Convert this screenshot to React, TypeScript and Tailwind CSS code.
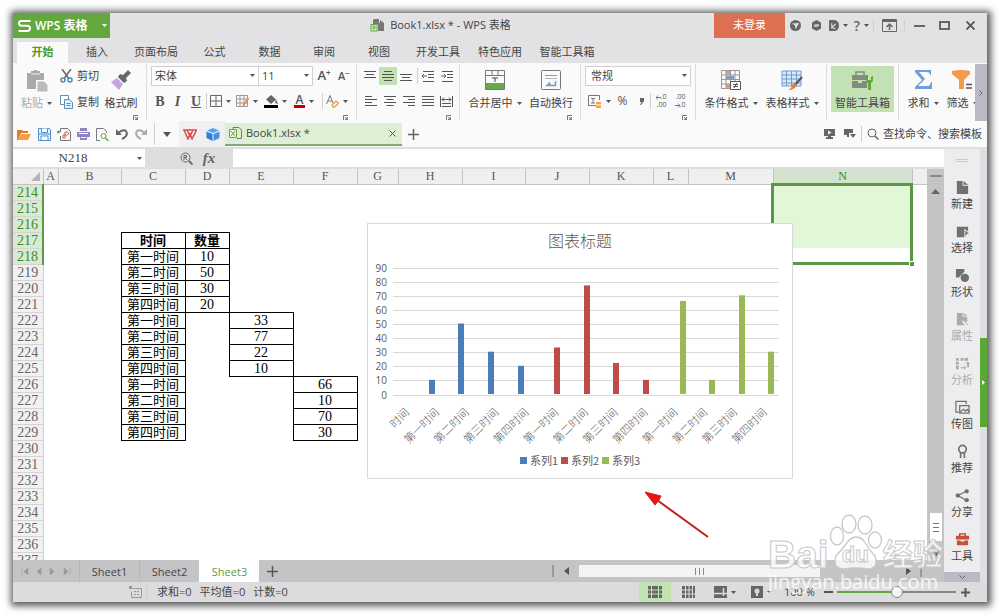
import { useState, type ReactNode } from 'react';
import clsx from 'clsx';

const ribbonTabs = [
  { label: '开始', width: 'w-[51px]' },
  { label: '插入', width: 'w-[58px]' },
  { label: '页面布局', width: 'w-[60px]' },
  { label: '公式', width: 'w-[57px]' },
  { label: '数据', width: 'w-[53px]' },
  { label: '审阅', width: 'w-[56px]' },
  { label: '视图', width: 'w-[54px]' },
  { label: '开发工具', width: 'w-[64px]' },
  { label: '特色应用', width: 'w-[60px]' },
  { label: '智能工具箱', width: 'w-[74px]' },
];

const columns = [
  { name: 'A', width: 'w-[15px]' },
  { name: 'B', width: 'w-[63px]' },
  { name: 'C', width: 'w-[64px]' },
  { name: 'D', width: 'w-[44px]' },
  { name: 'E', width: 'w-[64px]' },
  { name: 'F', width: 'w-[64px]' },
  { name: 'G', width: 'w-[41px]' },
  { name: 'H', width: 'w-[64px]' },
  { name: 'I', width: 'w-[63px]' },
  { name: 'J', width: 'w-[64px]' },
  { name: 'K', width: 'w-[64px]' },
  { name: 'L', width: 'w-[35px]' },
  { name: 'M', width: 'w-[85px]' },
  { name: 'N', width: 'w-[139px]' },
];

const periods = ['第一时间', '第二时间', '第三时间', '第四时间'];

const cells: Record<number, Record<string, string>> = {
  217: { C: '时间', D: '数量' },
};
[
  { start: 218, column: 'D', values: ['10', '50', '30', '20'] },
  { start: 222, column: 'E', values: ['33', '77', '22', '10'] },
  { start: 226, column: 'F', values: ['66', '10', '70', '30'] },
].forEach(({ start, column, values }) => {
  values.forEach((value, i) => {
    cells[start + i] = { C: periods[i], [column]: value };
  });
});

const rows = Array.from({ length: 24 }, (_, i) => 214 + i);

const series = [
  { name: '系列1', color: '#4a7ebb', bars: [[61, 10], [90, 50], [120, 30], [150, 20]] },
  { name: '系列2', color: '#be4b48', bars: [[186, 33], [216, 77], [245, 22], [275, 10]] },
  { name: '系列3', color: '#98b954', bars: [[312, 66], [341, 10], [371, 70], [400, 30]] },
];

const categories = ['时间', ...periods, ...periods, ...periods];

function Caret({ className }: { className?: string }) {
  return (
    <svg width="5" height="3" viewBox="0 0 5 3" className={clsx('shrink-0', className ?? 'fill-[#555]')}>
      <path d="M0 0h5L2.5 3z" />
    </svg>
  );
}

function Lines({ widths, align = 'left' }: { widths: number[]; align?: 'left' | 'center' | 'right' }) {
  return (
    <svg width="12" height="12" viewBox="0 0 12 12" className="fill-[#555]">
      {widths.map((w, i) => (
        <rect
          key={i}
          x={align === 'left' ? 0 : align === 'center' ? (12 - w) / 2 : 12 - w}
          y={1 + i * 3}
          width={w}
          height="1"
        />
      ))}
    </svg>
  );
}

function Indent({ flip }: { flip?: boolean }) {
  return (
    <svg width="13" height="13" viewBox="0 0 13 13" fill="none" stroke="#555">
      <path d="M1 1.5h11M6 4.5h6M6 7.5h6M1 11.5h11" />
      <path d={flip ? 'M0 6h5M3 4l2 2-2 2' : 'M0 6h5M2 4l-2 2 2 2'} stroke="#4a6a86" />
    </svg>
  );
}

function Tool({ label, width, children, caret, active }: {
  label: string;
  width: string;
  children: ReactNode;
  caret?: boolean;
  active?: boolean;
}) {
  return (
    <button
      aria-label={label}
      className={clsx('flex h-[18px] shrink-0 items-center justify-center gap-1', width, active && 'bg-[#c3e2b4]')}
    >
      {children}
      {caret && <Caret />}
    </button>
  );
}

function BigTool({ label, width, children, caret, className }: {
  label: string;
  width: string;
  children: ReactNode;
  caret?: boolean;
  className?: string;
}) {
  return (
    <button className={clsx('flex h-[46px] shrink-0 flex-col items-center justify-between pt-1 pb-px', width, className)}>
      {children}
      <span className="flex items-center gap-1 whitespace-nowrap leading-4">
        {label}
        {caret && <Caret />}
      </span>
    </button>
  );
}

function Group({ children, className, launcher }: { children: ReactNode; className: string; launcher?: boolean }) {
  return (
    <div className={clsx('relative my-px shrink-0 border-r border-[#dcdcdc] pt-[2px]', className)}>
      {children}
      {launcher && (
        <button aria-label="更多设置" className="absolute right-2 bottom-0">
          <svg width="5" height="5" viewBox="0 0 5 5" fill="none" stroke="#777">
            <path d="M.5 5V.5H5M2 2l2.5 2.5M4.5 2v2.5H2" />
          </svg>
        </button>
      )}
    </div>
  );
}

function Divider({ className }: { className?: string }) {
  return <span className={clsx('w-px shrink-0 bg-[#cfcfcf]', className ?? 'h-4')} />;
}

function TitleBar() {
  return (
    <header className="flex h-[25px] shrink-0 bg-[#e2e2e4]">
      <div className="flex flex-3">
        <button className="flex w-[97px] items-center bg-[#62a83d] pl-[5px] text-[12px] font-semibold text-white">
          <svg width="13" height="12" viewBox="0 0 13 12" fill="none" stroke="white" strokeWidth="2">
            <path d="M12.5 1H3.5Q1 1 1 3.300T3.500 5.800H9.500Q12 5.800 12 8.300T9.500 11H.5" />
          </svg>
          <span className="ml-1 flex-1 text-left whitespace-nowrap">WPS 表格</span>
          <Caret className="mr-[3px] fill-white" />
        </button>
      </div>
      <h1 className="flex items-center gap-1.5 whitespace-nowrap">
        <svg width="14" height="13" viewBox="0 0 14 13">
          <path d="M4 0h5v4h1V1l4 3v8H8V5H3V1z" fill="#777" />
          <rect x="1" y="5.500" width="6" height="6.500" fill="#e8f4e0" stroke="#62a83d" />
          <path d="M3 7h2v3H3z" fill="none" stroke="#62a83d" />
        </svg>
        Book1.xlsx * - WPS 表格
      </h1>
      <div className="flex flex-4 items-center justify-end">
        <button className="h-full w-[71px] bg-[#dd7053] text-white">未登录</button>
        <Tool label="皮肤" width="w-[21px]">
          <svg width="11" height="11" viewBox="0 0 11 11">
            <circle cx="5.500" cy="5.500" r="5.500" fill="#666" />
            <path d="M2 3.500L5 5.500 5.500 9.500 9 3z" fill="#e2e2e4" />
          </svg>
        </Tool>
        <Tool label="云服务" width="w-[20px]">
          <svg width="11" height="11" viewBox="0 0 11 11">
            <path d="M5.500 0l4.500 2.500v6l-4.500 2.500L1 8.500v-6z" fill="#666" />
            <path d="M2.500 5.500l2-1.500h3l1 1.500-2 1.500h-3z" fill="#c0c0c2" />
          </svg>
        </Tool>
        <Tool label="文档" width="w-[24px]" caret>
          <svg width="10" height="11" viewBox="0 0 9 10">
            <path d="M0 0h4Q9 0 9 5T4 10H0z" fill="#666" />
            <path d="M2.500 3v4L6 3.500M3 7.500h3" stroke="#e2e2e4" fill="none" />
          </svg>
        </Tool>
        <Tool label="帮助" width="w-[23px]" caret>
          <span className="text-[14px] font-semibold text-[#666]">?</span>
        </Tool>
        <Divider className="h-3" />
        <Tool label="隐藏功能区" width="w-[30px]">
          <svg width="15" height="13" viewBox="0 0 15 13" fill="none" stroke="#666">
            <path d="M.5.5h14v12H.5z" />
            <path d="M1 2h13" strokeWidth="2" />
            <path d="M7.500 11V5.500M4.500 8l3-3 3 3" strokeWidth="1.500" />
          </svg>
        </Tool>
        <Divider className="h-3" />
        <Tool label="最小化" width="w-[29px]">
          <span className="h-[2px] w-[11px] bg-[#666]" />
        </Tool>
        <Tool label="最大化" width="w-[20px]">
          <span className="h-[9px] w-[11px] border-2 border-[#666]" />
        </Tool>
        <Tool label="关闭" width="w-[33px]">
          <svg width="9" height="9" viewBox="0 0 9 9" stroke="#555" strokeWidth="1.800">
            <path d="M.5.5l8 8M8.500.5l-8 8" />
          </svg>
        </Tool>
      </div>
    </header>
  );
}

function FontGroup() {
  return (
    <Group className="w-[210px] pl-1" launcher>
      <div className="flex h-5 items-center">
        <label className="relative w-[108px]">
          <select aria-label="字体" className="h-[20px] w-full appearance-none border border-[#d0d0d0] bg-white pl-[3px]">
            <option>宋体</option>
          </select>
          <Caret className="absolute top-2 right-1 fill-[#555]" />
        </label>
        <label className="relative -ml-px w-[55px]">
          <select aria-label="字号" className="h-[20px] w-full appearance-none border border-[#d0d0d0] bg-white pl-[3px]">
            <option>11</option>
          </select>
          <Caret className="absolute top-2 right-1 fill-[#555]" />
        </label>
        <Tool label="增大字号" width="w-[22px]">
          <span className="text-[13px] font-semibold text-[#555]">A<sup className="text-[8px]">+</sup></span>
        </Tool>
        <Tool label="减小字号" width="w-[18px]">
          <span className="text-[11px] font-semibold text-[#555]">A<sup className="text-[8px]">−</sup></span>
        </Tool>
      </div>
      <div className="mt-[5px] flex h-5 items-center font-['Liberation_Serif',serif] text-[14px] text-[#555]">
        <Tool label="加粗" width="w-[18px]"><b>B</b></Tool>
        <Tool label="倾斜" width="w-[17px]"><i className="font-bold">I</i></Tool>
        <Tool label="下划线" width="w-[20px]"><span className="font-bold underline">U</span></Tool>
        <Divider />
        <Tool label="边框" width="w-[27px]" caret>
          <svg width="12" height="12" viewBox="0 0 12 12" fill="none" stroke="#666">
            <path d="M.5.5h11v11H.5zM6 .5v11M.5 6h11" />
          </svg>
        </Tool>
        <Tool label="绘图边框" width="w-[26px]" caret>
          <svg width="13" height="12" viewBox="0 0 13 12" fill="none" stroke="#999">
            <path d="M.5.5h11v11H.5zM4 .5v11M8 .5v11M.5 4h11M.5 8h11" />
            <path d="M12.500 3L7 11" stroke="#e2945a" strokeWidth="2" />
          </svg>
        </Tool>
        <Tool label="填充颜色" width="w-[30px]" caret>
          <svg width="14" height="13" viewBox="0 0 14 13">
            <path d="M7 0l5 4.500L7 9 2 4.500zM12 4l2 5-3-1z" fill="#666" />
            <path d="M0 10h14v3H0z" fill="#000" />
          </svg>
        </Tool>
        <Tool label="字体颜色" width="w-[28px]" caret>
          <span className="border-b-[3px] border-[#c00000] px-[2px] font-['Open_Sans',sans-serif] text-[12px] leading-[11px] font-semibold">A</span>
        </Tool>
        <Divider className="ml-1 h-4" />
        <Tool label="清除格式" width="w-[28px]" caret>
          <svg width="13" height="13" viewBox="0 0 13 13" fill="none" stroke="#777">
            <path d="M.5 9L4 .5 7 8M2 6h4" />
            <path d="M6 10l4-4 2.500 2-4 4H7z" stroke="#e8a04c" strokeWidth="1.300" />
          </svg>
        </Tool>
      </div>
    </Group>
  );
}

function Ribbon() {
  return (
    <div className="flex h-[58px] shrink-0 overflow-hidden bg-[#fafafa]">
      <div className="flex min-w-0 flex-1 overflow-hidden">
        <Group className="w-[134px]" launcher>
          <div className="flex">
            <BigTool label="粘贴" width="w-[47px]" caret className="text-[#aaa]">
              <svg width="22" height="22" viewBox="0 0 22 22">
                <path d="M1 3h4V1h3V0h3v1h3v2h4v7h-8v9H1z" fill="#aaa" />
                <path d="M5 4h9" stroke="#eee" />
                <path d="M11 11h7l4 4v7H11z" fill="#bbb" stroke="#fafafa" />
              </svg>
            </BigTool>
            <div className="flex w-[42px] flex-col justify-between">
              <button className="flex h-[20px] items-center gap-1 whitespace-nowrap">
                <svg width="13" height="14" viewBox="0 0 13 14" fill="none" strokeWidth="1.500">
                  <path d="M2 0l6.500 9M11 0L4.500 9" stroke="#666" />
                  <circle cx="3" cy="11" r="2" stroke="#4a8ab8" />
                  <circle cx="10" cy="11" r="2" stroke="#4a8ab8" />
                </svg>
                剪切
              </button>
              <button className="flex h-[20px] items-center gap-1 whitespace-nowrap">
                <svg width="13" height="14" viewBox="0 0 13 14" fill="#fff" stroke="#5b8fb5">
                  <path d="M.5.5h8v9h-8z" />
                  <path d="M4.500 4.500h5l3 3v6h-8z" fill="#e4f0f8" />
                  <path d="M6.500 8.500h4M6.500 10.500h4" />
                </svg>
                复制
              </button>
            </div>
            <BigTool label="格式刷" width="w-[38px]">
              <svg width="20" height="20" viewBox="0 0 20 20">
                <path d="M17 0l3 3-5 5 1 3-3 2-6-6 2-3 3 1z" fill="#666" />
                <path d="M6 8l6 6-4 6-8-8z" fill="#c5a3e6" />
              </svg>
            </BigTool>
          </div>
        </Group>

        <FontGroup />

        <Group className="w-[103px] pl-1" launcher>
          <div className="flex h-5 items-center">
            <Tool label="顶端对齐" width="w-[18px]"><Lines widths={[12, 8, 12]} align="center" /></Tool>
            <Tool label="垂直居中" width="w-[18px]" active><Lines widths={[8, 12, 12, 8]} align="center" /></Tool>
            <Tool label="底端对齐" width="w-[18px]"><Lines widths={[0, 12, 8, 12]} align="center" /></Tool>
            <Divider className="ml-[2px] h-4" />
            <Tool label="减少缩进" width="w-[20px]"><Indent /></Tool>
            <Tool label="增加缩进" width="w-[18px]"><Indent flip /></Tool>
          </div>
          <div className="mt-[5px] flex h-5 items-center">
            <Tool label="左对齐" width="w-[19px]"><Lines widths={[7, 12, 7, 12]} /></Tool>
            <Tool label="居中" width="w-[19px]"><Lines widths={[12, 7, 12, 7]} align="center" /></Tool>
            <Tool label="右对齐" width="w-[19px]"><Lines widths={[12, 7, 12, 7]} align="right" /></Tool>
            <Tool label="两端对齐" width="w-[19px]"><Lines widths={[12, 12, 12, 12]} /></Tool>
            <Tool label="分散对齐" width="w-[19px]">
              <svg width="13" height="11" viewBox="0 0 13 11" fill="none" stroke="#555">
                <path d="M.5 0v11M12.500 0v11M2 3.500h9M4 1.500l-2 2 2 2M9 1.500l2 2-2 2M2 7.500h9M2 10.500h9" />
              </svg>
            </Tool>
          </div>
        </Group>

        <Group className="flex w-[121px] pl-1" launcher>
          <BigTool label="合并居中" width="w-[62px]" caret>
            <svg width="20" height="20" viewBox="0 0 20 20" fill="none" stroke="#777">
              <path d="M1 13h18v6H1z" fill="#6aa84f" stroke="none" />
              <path d="M.5.5h19v19H.5zM.5 5.500h19M7 0v5M13 0v5" />
              <path d="M7 8h6M10 8v4" stroke="#444" />
            </svg>
          </BigTool>
          <BigTool label="自动换行" width="w-[50px]">
            <svg width="20" height="20" viewBox="0 0 20 20" fill="none" stroke="#777">
              <rect x=".5" y=".5" width="19" height="19" rx="1" />
              <path d="M4 5.500h12" stroke="#999" />
              <path d="M4 8.500h12" stroke="#bfaec4" />
              <path d="M14.500 11v4.500H6M8.500 13L6 15.500h3z" stroke="#6f9bd0" strokeWidth="1.500" />
            </svg>
          </BigTool>
        </Group>

        <Group className="w-[115px] pl-1" launcher>
          <label className="relative block w-[106px]">
            <select aria-label="数字格式" className="h-[20px] w-full appearance-none border border-[#d0d0d0] bg-white pl-[5px]">
              <option>常规</option>
            </select>
            <Caret className="absolute top-2 right-1 fill-[#555]" />
          </label>
          <div className="mt-[5px] flex h-5 items-center text-[#555]">
            <Tool label="货币" width="w-[28px]" caret>
              <svg width="14" height="13" viewBox="0 0 14 13" fill="none" stroke="#777">
                <path d="M8 10.500H.5V.5h11V5M3 3.500h4M5 3.500V8M3 8h4" />
                <path d="M8.500 7.500h4v5h-4z" fill="#f2a33c" stroke="#f2a33c" />
                <path d="M8 10h6" stroke="#fff" />
              </svg>
            </Tool>
            <Tool label="百分比" width="w-[19px]"><span className="text-[12px]">%</span></Tool>
            <Tool label="千位分隔" width="w-[18px]">
              <svg width="5" height="7" viewBox="0 0 5 7"><path d="M1 0h4v3L2 7H1l1.500-3H1z" fill="#666" /></svg>
            </Tool>
            <Divider />
            <Tool label="增加小数位" width="w-[20px]">
              <span className="flex flex-col items-end text-[7px] leading-[8px]">
                <span className="flex items-center">
                  <svg width="5" height="5" viewBox="0 0 5 5" fill="none" stroke="#4a86b8"><path d="M0 2.500h5M2 .5l-2 2 2 2" /></svg>
                  .0
                </span>
                <span>.00</span>
              </span>
            </Tool>
            <Tool label="减少小数位" width="w-[18px]">
              <span className="flex flex-col items-end text-[7px] leading-[8px]">
                <span>.00</span>
                <span className="flex items-center">
                  <svg width="5" height="5" viewBox="0 0 5 5" fill="none" stroke="#4a86b8"><path d="M0 2.500h5M3 .5l2 2-2 2" /></svg>
                  .0
                </span>
              </span>
            </Tool>
          </div>
        </Group>

        <Group className="flex w-[131px] pl-[5px]">
          <BigTool label="条件格式" width="w-[60px]" caret>
            <svg width="20" height="20" viewBox="0 0 20 20" fill="none" stroke="#999">
              <path d="M5 1h5v4H5zM5 14h4v4H5z" fill="#ef9a68" stroke="none" />
              <path d="M5 6h8v3H5z" fill="#6ea0dc" stroke="none" />
              <path d="M.5.5h18v18H.5zM5 .5v18M9.500 .5v18M14 .5v18M.5 5h18M.5 9.500h18M.5 14h18" />
              <path d="M9.500 11.500h10v8h-10z" fill="#fff" stroke="#555" />
              <path d="M12 14.500h5M12 16.500h5M16 13l-3 5" stroke="#555" />
            </svg>
          </BigTool>
          <BigTool label="表格样式" width="w-[62px]" caret>
            <svg width="22" height="20" viewBox="0 0 22 20" fill="none" stroke="#6f9bd0">
              <path d="M1 1h19v15H1z" fill="#dce9f8" />
              <path d="M5.500 1v15M10.500 1v15M15.500 1v15M1 5h19M1 9h19M1 13h19" />
              <path d="M21 7l-7 8" stroke="#555" strokeWidth="2" />
              <path d="M14 13l2 2q-2 5-9 5 4-2 4-5 1-2 3-2z" fill="#e0803c" stroke="none" />
            </svg>
          </BigTool>
        </Group>

        <Group className="flex w-[72px] pl-1">
          <BigTool label="智能工具箱" width="w-[63px]" className="bg-[#c3e2b4]">
            <svg width="22" height="20" viewBox="0 0 22 20">
              <path d="M4 5V2h8v3" fill="none" stroke="#888" strokeWidth="1.500" />
              <path d="M0 5h16v5H0zM0 11h6v2h4v-2h5v7H0z" fill="#858b83" />
              <path d="M14 6v4q0 2 2 3v7h3v-7q2-1 2-3V6l-2 1v3h-3V7z" fill="#62a83d" />
            </svg>
          </BigTool>
        </Group>

        <div className="flex shrink-0 pt-[3px] pl-1">
          <BigTool label="求和" width="w-[40px]" caret>
            <svg width="17" height="19" viewBox="0 0 17 19">
              <path d="M0 0h16v5h-1q0-3-3-3H4l6 7-7 7h10q2 0 3-4h1v7H0v-2l7-7-7-8z" fill="#6ba0d8" />
            </svg>
          </BigTool>
          <BigTool label="筛选" width="w-[38px]" caret>
            <svg width="20" height="20" viewBox="0 0 20 20">
              <path d="M0 1Q9-1 18 1v3l-6 6v9H7v-9L0 4z" fill="#f29a50" />
              <path d="M14 14.500h6M14 18h6" stroke="#555" strokeWidth="1.500" />
            </svg>
          </BigTool>
        </div>
      </div>
      <button aria-label="向右滚动" className="mt-px flex w-3 items-center justify-center bg-[#b9bac4]">
        <svg width="4" height="6" viewBox="0 0 4 6" fill="none" stroke="#666"><path d="M.5.5L3 3 .5 5.500" /></svg>
      </button>
    </div>
  );
}

function QuickBar() {
  return (
    <div className="flex h-[26px] shrink-0 items-center bg-[#fafafa] pl-px">
      <Tool label="打开" width="w-[20px]">
        <svg width="14" height="11" viewBox="0 0 14 11">
          <path d="M0 11V1h5l1 1h5v2H4L1 11z" fill="#e07d20" /><path d="M4 5h10l-3 6H1z" fill="#f2a044" />
        </svg>
      </Tool>
      <Tool label="保存" width="w-[20px]">
        <svg width="13" height="13" viewBox="0 0 13 13" fill="none" stroke="#4f8fd0">
          <path d="M.5.5h11l1 1v11H.5z" fill="#e4f0fb" /><path d="M3.500.5v4h6v-4M3 8h7v4.500H3z" fill="#fff" /><path d="M1 6h11" />
        </svg>
      </Tool>
      <Tool label="输出为PDF" width="w-[20px]">
        <svg width="14" height="13" viewBox="0 0 14 13" fill="none" stroke="#777">
          <path d="M3.500 4V.5h7l3 3v9h-10V8" />
          <path d="M0 4h3M1.500 2.500v3" stroke="#62a83d" strokeWidth="1.500" />
          <path d="M8 7H6v3h2V4h1.500q2 0 2 1.500T9.500 7H8" stroke="#d05a5a" />
        </svg>
      </Tool>
      <Tool label="打印" width="w-[19px]">
        <svg width="13" height="12" viewBox="0 0 13 12">
          <path d="M3 0h7v3H3zM0 4h13v5H0zM3 8h7v4H3z" fill="#8f83c4" />
          <path d="M2 5.500h9M4 9.500h5" stroke="#fff" />
        </svg>
      </Tool>
      <Tool label="打印预览" width="w-[19px]">
        <svg width="13" height="13" viewBox="0 0 13 13" fill="none" stroke="#777">
          <path d="M4 12.500H.5V.5h7l3 3V5" />
          <circle cx="7.500" cy="8" r="2.500" stroke="#62a83d" /><path d="M9.500 10l3 3" stroke="#62a83d" strokeWidth="1.500" />
        </svg>
      </Tool>
      <Tool label="撤销" width="w-[19px]">
        <svg width="12" height="12" viewBox="0 0 12 12">
          <path d="M2 5q7-5 8.500-1T6 11" fill="none" stroke="#666" strokeWidth="2" /><path d="M0 1v6h6z" fill="#666" />
        </svg>
      </Tool>
      <Tool label="恢复" width="w-[19px]">
        <svg width="12" height="12" viewBox="0 0 12 12">
          <path d="M10 5Q3 0 1.500 4T6 11" fill="none" stroke="#aaa" strokeWidth="2" /><path d="M12 1v6H6z" fill="#aaa" />
        </svg>
      </Tool>
      <Divider className="ml-1 h-[22px]" />
      <Tool label="自定义快速访问" width="w-[24px]">
        <svg width="8" height="5" viewBox="0 0 8 5"><path d="M0 0h8L4 5z" fill="#555" /></svg>
      </Tool>
      <div className="flex h-full items-center bg-[#f0f0f2]">
        <Tool label="WPS首页" width="w-[22px]">
          <svg width="14" height="11" viewBox="0 0 14 11" fill="none" stroke="#dd4b4b" strokeWidth="1.500">
            <path d="M0 1h14M1 1l4 9 2-5 2 5 4.500-9M4 1l3 6 3-6" />
          </svg>
        </Tool>
        <Tool label="在线模板" width="w-[24px]">
          <svg width="14" height="13" viewBox="0 0 14 13">
            <path d="M7 0l6 2.500L7 5 1 2.500z" fill="#5aa2ee" /><path d="M.5 3.500L6.500 6v7l-6-3z" fill="#2f7fd8" /><path d="M13.500 3.500L7.500 6v7l6-3z" fill="#4790e4" />
          </svg>
        </Tool>
      </div>
      <div className="flex h-[23px] w-[177px] items-center border-b-2 border-[#84a974] bg-[#dfefd6] pl-1">
        <svg width="13" height="12" viewBox="0 0 13 12" fill="none" stroke="#777">
          <path d="M4 2V.5h6l2.500 2.500v8.500H8" /><path d="M.5 2.500h7v8h-7z" fill="#eef8e8" stroke="#62a83d" /><path d="M2 4l4 5M6 4L2 9" stroke="#62a83d" />
        </svg>
        <span className="ml-1 flex-1">Book1.xlsx *</span>
        <Tool label="关闭文档" width="w-[20px]">
          <svg width="7" height="7" viewBox="0 0 7 7" stroke="#555"><path d="M.5.5l6 6M6.500.5l-6 6" /></svg>
        </Tool>
      </div>
      <Tool label="新建文档" width="w-[23px]">
        <svg width="11" height="11" viewBox="0 0 11 11" stroke="#666" strokeWidth="1.500"><path d="M5.500 0v11M0 5.500h11" /></svg>
      </Tool>
      <div className="ml-auto flex items-center pr-1">
        <Tool label="演示" width="w-[20px]">
          <svg width="11" height="10" viewBox="0 0 11 10"><path d="M0 0h11v7H7v1h2v2H2V8h2V7H0z" fill="#666" /><path d="M4 1.500v4l3.500-2z" fill="#fff" /></svg>
        </Tool>
        <Tool label="界面设置" width="w-[22px]">
          <svg width="12" height="10" viewBox="0 0 12 10"><path d="M0 0h9v4H5v4H3V6H0z" fill="#666" /><path d="M6 5h6L9 9z" fill="#666" /></svg>
        </Tool>
        <Divider />
        <label className="flex items-center pl-[5px]">
          <svg width="12" height="12" viewBox="0 0 12 12" fill="none" stroke="#666"><circle cx="5" cy="5" r="4" /><path d="M8 8l3.500 3.500" strokeWidth="1.500" /></svg>
          <input aria-label="查找命令、搜索模板" placeholder="查找命令、搜索模板" className="ml-1 w-[100px] bg-transparent outline-none placeholder:text-[#444]" />
        </label>
      </div>
    </div>
  );
}

function FormulaBar() {
  return (
    <div className="flex h-[22px] shrink-0 items-stretch border-y-2 border-[#dededf] bg-[#dededf]">
      <label className="relative flex w-[132px] bg-white">
        <input aria-label="名称框" defaultValue="N218" className="w-[120px] text-center font-['Liberation_Serif',serif] text-[13px] text-[#444] outline-none" />
        <Caret className="absolute top-2 right-[3px] fill-[#555]" />
      </label>
      <div className="flex w-[88px] items-center justify-end gap-[3px] pr-[14px]">
        <Tool label="查找函数" width="w-[20px]">
          <svg width="13" height="13" viewBox="0 0 13 13" fill="none" stroke="#666"><circle cx="5.500" cy="5.500" r="4.500" /><path d="M9 9l3.500 3.500" strokeWidth="1.800" /><path d="M4 8V3.500h2.500v2H4M5.500 5.500L7 8" /></svg>
        </Tool>
        <Tool label="插入函数" width="w-[20px]">
          <i className="font-['Liberation_Serif',serif] text-[15px] font-bold text-[#666]">fx</i>
        </Tool>
      </div>
      <input aria-label="编辑栏" className="min-w-0 flex-1 bg-white outline-none" />
    </div>
  );
}

function Chart() {
  return (
    <figure className="absolute top-[54px] left-[354px] border border-[#d9d9d9] bg-white">
      <svg width="424" height="254" viewBox="0 0 424 254" fill="#595959" className="font-['Noto_Sans_CJK_SC',sans-serif] font-light">
        <text x="212" y="23" fontSize="16" textAnchor="middle">图表标题</text>
        {Array.from({ length: 10 }, (_, i) => (
          <g key={i}>
            <path d={`M25 ${Math.round(170.5 - i * 14.1) + 0.5}H411`} stroke="#d9d9d9" />
            <text x="19" y={174.500 - i * 14.1} fontSize="10" textAnchor="end" className="font-['Open_Sans',sans-serif] font-normal">{i * 10}</text>
          </g>
        ))}
        {series.map((s) => s.bars.map(([x, value]) => (
          <rect key={x} x={x} y={170 - value * 1.41} width="6" height={value * 1.41} fill={s.color} />
        )))}
        {categories.map((name, i) => (
          <text key={i} fontSize="11" textAnchor="end" transform={`translate(${42 + i * 29.8} 189) rotate(-45)`}>{name}</text>
        ))}
        {series.map((s, i) => (
          <g key={s.name} fontSize="11" className="font-normal">
            <rect x={152 + i * 41} y="233" width="7" height="7" fill={s.color} />
            <text x={162 + i * 41} y="241">{s.name}</text>
          </g>
        ))}
      </svg>
    </figure>
  );
}

function Sheet() {
  return (
    <div className="relative min-w-0 flex-1 overflow-hidden bg-white">
      <table className="w-full table-fixed border-collapse font-['Liberation_Serif','Noto_Sans_CJK_SC',serif] text-[14px] leading-[15px]">
        <colgroup>
          <col className="w-[30px]" />
          {columns.map((c) => <col key={c.name} className={c.width} />)}
          <col />
        </colgroup>
        <thead>
          <tr className="h-[15px] bg-[#efeff0] text-[#555]">
            <th className="border-b border-[#c4c4c4] p-0">
              <svg width="9" height="9" viewBox="0 0 9 9" className="mr-[3px] ml-auto"><path d="M9 0v9H0z" fill="#b5b5b5" /></svg>
            </th>
            {columns.map((c) => (
              <th
                key={c.name}
                className={clsx('border-x border-b border-[#c4c4c4] p-0 text-[12px] leading-[14px] font-normal', c.name === 'N' && 'bg-[#d3e4ce] text-[#2e8b1e]')}
              >
                {c.name}
              </th>
            ))}
            <th className="border-b border-[#c4c4c4] p-0" />
          </tr>
        </thead>
        <tbody>
          {rows.map((row) => (
            <tr key={row} className="h-4">
              <th
                className={clsx(
                  'border-y border-y-[#d4d4d4] p-0 text-center font-normal',
                  row <= 218 ? 'border-r-2 border-r-[#5b9a43] bg-[#d8ead2] text-[#3f8a2c]' : 'border-r border-r-[#d0d0d0] bg-[#f1f1f2] text-[#666]',
                )}
              >
                {row}
              </th>
              {columns.map((c) => {
                const value = cells[row]?.[c.name];
                return (
                  <td
                    key={c.name}
                    className={clsx(
                      'p-0 text-center whitespace-nowrap text-black',
                      value && 'border border-black',
                      c.name === 'C' && 'text-[13px]',
                      row === 217 && 'text-[13px] font-bold',
                    )}
                  >
                    {value}
                  </td>
                );
              })}
              <td />
            </tr>
          ))}
        </tbody>
      </table>
      <div className="absolute top-[14px] left-[758px] h-[82px] w-[142px] border-[3px] border-[#5b9645]">
        <div className="h-[62px] bg-[#e2f6d8]" />
        <span className="absolute -right-1 -bottom-1 size-[5px] border-t border-l border-white bg-[#5b9645]" />
      </div>
      <Chart />
      <svg width="66" height="50" viewBox="0 0 66 50" className="absolute top-[322px] left-[632px]">
        <path d="M12 9l51 37" stroke="#c4201c" strokeWidth="2" />
        <path d="M0 1l16 4-2 4-4 5z" fill="#ee1111" stroke="#c4201c" />
      </svg>
    </div>
  );
}

function VerticalScroll() {
  return (
    <div className="flex w-[17px] flex-col items-center bg-[#c4c4c6] pt-[6px]">
      <span className="h-[2px] w-3 bg-[#888]" />
      <button aria-label="向上滚动" className="mt-3">
        <svg width="9" height="5" viewBox="0 0 9 5"><path d="M0 5h9L4.500 0z" fill="#666" /></svg>
      </button>
      <div className="mt-auto flex h-[28px] w-3 flex-col items-center justify-center gap-[3px] bg-white">
        <span className="h-px w-[6px] bg-[#777]" />
        <span className="h-px w-[6px] bg-[#777]" />
        <span className="h-px w-[6px] bg-[#777]" />
      </div>
      <button aria-label="向下滚动" className="mt-2 mb-[3px]">
        <svg width="6" height="8" viewBox="0 0 6 8"><path d="M0 0h6v3L3 8 0 3z" fill="#666" /></svg>
      </button>
    </div>
  );
}

function SheetTabs() {
  const [current, setCurrent] = useState('Sheet3');
  return (
    <div className="flex h-[22px] shrink-0 items-center bg-[#c4c4c6]">
      <div className="flex w-[66px] items-center gap-[6px] pl-2">
        {['M1 0v7M7 0v7L3 3.500z', 'M6 0v7L2 3.500z', 'M1 0v7l4-3.500z', 'M7 0v7M1 0v7l4-3.500z'].map((d) => (
          <button key={d} aria-label="切换工作表">
            <svg width="8" height="7" viewBox="0 0 8 7" fill="#999" stroke="#999" strokeWidth=".5"><path d={d} /></svg>
          </button>
        ))}
      </div>
      {['Sheet1', 'Sheet2', 'Sheet3'].map((name) => (
        <button
          key={name}
          onClick={() => setCurrent(name)}
          className={clsx('h-full w-[60px] border-l pt-0.5', current === name ? 'border-white bg-white text-[#5a9a3c]' : 'border-[#b8b8ba] text-[#444]')}
        >
          {name}
        </button>
      ))}
      <Tool label="新建工作表" width="w-[26px]">
        <svg width="11" height="11" viewBox="0 0 11 11" stroke="#555" strokeWidth="1.500"><path d="M5.500 0v11M0 5.500h11" /></svg>
      </Tool>
      <div className="ml-auto flex items-center">
        <span className="h-3 w-0.5 bg-[#999]" />
        <Tool label="向左滚动" width="w-[25px]">
          <svg width="5" height="8" viewBox="0 0 5 8"><path d="M5 0v8L0 4z" fill="#555" /></svg>
        </Tool>
        <div className="w-[317px]">
          <div className="flex h-3 w-[241px] items-center justify-center gap-[3px] bg-[#f3f3f3]">
            <span className="h-[7px] w-px bg-[#888]" />
            <span className="h-[7px] w-px bg-[#888]" />
            <span className="h-[7px] w-px bg-[#888]" />
          </div>
        </div>
        <Tool label="向右滚动工作表" width="w-[24px]">
          <svg width="5" height="8" viewBox="0 0 5 8"><path d="M0 0v8l5-4z" fill="#555" /></svg>
        </Tool>
        <span className="mr-[22px] h-3 w-0.5 bg-[#999]" />
      </div>
    </div>
  );
}

const sideTools: { label: string; icon: ReactNode; muted?: boolean }[] = [
  { label: '新建', icon: <path d="M2 1h6v5h6v9H2zM9 1l5 4H9z" /> },
  { label: '选择', icon: <path d="M2 3h12v5l-4-3v9H2zM11 7l4 3.500h-2L11 13z" /> },
  { label: '形状', icon: <><path d="M1 1h9v3L4 10H1z" /><circle cx="10.500" cy="10.500" r="4.500" /></> },
  { label: '属性', muted: true, icon: <><path d="M2 1h6v4h5v6l-5-3v4l3 2H2zM9 1l4 3H9z" /><path d="M8 8l6 6" stroke="currentColor" /></> },
  { label: '分析', muted: true, icon: <path d="M1 2h3v3H1zM6 2h3v3H6zM10 2h4v3h-4zM1 6h3v3H1zM1 10h3v4H1zM6 12h4v-2l2 2.500L10 15v-2H6zM13 12V8h-2l2.500-2L16 8h-1v4z" /> },
  { label: '传图', icon: <g fill="none" stroke="currentColor" strokeWidth="1.300"><path d="M4 13H1V1.500h11v3" /><path d="M5 6h10v8H5zM5 13l4-3 2 2 2-2 2 3" /></g> },
  { label: '推荐', icon: <g fill="none" stroke="currentColor" strokeWidth="1.800"><circle cx="8" cy="5.500" r="4" /><path d="M6 9v6M10 9v6" /></g> },
  { label: '分享', icon: <><circle cx="3" cy="8" r="2.300" /><circle cx="12.500" cy="3.500" r="2.300" /><circle cx="12.500" cy="13" r="2.300" /><path d="M12 3.500L3 8l9 5" fill="none" stroke="currentColor" strokeWidth="1.300" /></> },
  { label: '工具', icon: <g fill="#c94f35"><path d="M5 5V2h6v3" fill="none" stroke="#a84532" strokeWidth="1.500" /><path d="M1 4h14v4H1zM2 9h4v1h4V9h4v5H2z" /></g> },
];

function SidePanel() {
  return (
    <aside className="flex w-[43px] shrink-0 border-t-2 border-[#dededf] bg-[#ededf0]">
      <div className="flex w-9 flex-col items-center">
        <span className="mt-[10px] h-[3px] w-3 shrink-0 border-y border-[#ccc]" />
        <div className="mt-[18px] flex min-h-0 flex-1 flex-col items-center gap-[12px]">
          {sideTools.map((tool) => (
            <button key={tool.label} className={clsx('flex h-8 flex-col items-center justify-between', tool.muted ? 'text-[#aaa]' : 'text-[#444]')}>
              <svg width="15" height="15" viewBox="0 0 16 16" className={clsx('shrink-0 fill-current', !tool.muted && 'text-[#707070]')}>{tool.icon}</svg>
              <span className="leading-4">{tool.label}</span>
            </button>
          ))}
        </div>
        <button aria-label="更多工具" className="flex h-[10px] w-full shrink-0 items-center justify-center bg-[#b9bac4]">
          <svg width="7" height="4" viewBox="0 0 7 4" fill="none" stroke="#666"><path d="M.5.5l3 3 3-3" /></svg>
        </button>
      </div>
      <div className="flex w-[7px] flex-col bg-[#dfdfe3] pt-[189px]">
        <button aria-label="折叠侧栏" className="flex h-[89px] items-center justify-center bg-[#58a836]">
          <svg width="3" height="5" viewBox="0 0 3 5"><path d="M0 0v5l3-2.500z" fill="white" /></svg>
        </button>
      </div>
    </aside>
  );
}

function StatusBar() {
  return (
    <footer className="flex h-5 shrink-0 items-center bg-[#dcdcde]">
      <svg width="13" height="12" viewBox="0 0 13 12" fill="none" stroke="#999" className="ml-[116px]">
        <path d="M3.500 2.500h9v9h-10v-6" /><path d="M5 5.500h6M5 8.500h6" strokeDasharray="2 1" /><path d="M0 1.500h3" strokeWidth="3" />
      </svg>
      <Divider className="ml-1 h-3 bg-[#aaa]" />
      <p className="ml-[10px] flex gap-2 whitespace-nowrap"><span>求和=0</span><span>平均值=0</span><span>计数=0</span></p>
      <div className="ml-auto flex h-full items-center">
        <button aria-label="普通视图" className="flex h-full w-8 items-center justify-center bg-[#c3e2b4]">
          <svg width="14" height="12" viewBox="0 0 14 12"><path d="M0 0h14v12H0z" fill="#666" /><path d="M0 4h14M0 8h14M3.500 0v12M10.500 0v12" stroke="#c3e2b4" /></svg>
        </button>
        <Tool label="分页预览" width="w-[34px]">
          <svg width="13" height="12" viewBox="0 0 13 12"><path d="M0 0h13v12H0z" fill="#666" /><path d="M0 4h10M0 8h13M3.500 0v12M7 0v12M10.500 0v12" stroke="#dcdcde" /></svg>
        </Tool>
        <Tool label="阅读布局" width="w-[40px]" caret>
          <svg width="13" height="12" viewBox="0 0 13 12"><path d="M0 0h13v12H0z" fill="#666" /><path d="M0 7.500h13M9.500 2v8" stroke="#dcdcde" strokeWidth="1.500" /></svg>
        </Tool>
        <Tool label="护眼模式" width="w-[33px]" caret>
          <svg width="12" height="12" viewBox="0 0 12 12"><path d="M0 0h12v12H0z" fill="#666" /><circle cx="6" cy="5" r="2.500" fill="#dcdcde" /><path d="M5 7h2v3H5z" fill="#dcdcde" /></svg>
        </Tool>
        <span className="ml-[6px] w-[35px] whitespace-nowrap">100 %</span>
        <Tool label="缩小" width="w-[18px]"><span className="h-[2px] w-[9px] bg-[#555]" /></Tool>
        <input
          type="range"
          aria-label="显示比例"
          defaultValue={50}
          className="h-3 w-[119px] appearance-none bg-transparent [&::-webkit-slider-runnable-track]:h-[2px] [&::-webkit-slider-runnable-track]:bg-linear-to-r [&::-webkit-slider-runnable-track]:from-[#62a83d] [&::-webkit-slider-runnable-track]:from-50% [&::-webkit-slider-runnable-track]:to-[#888] [&::-webkit-slider-runnable-track]:to-50% [&::-webkit-slider-thumb]:-mt-[5px] [&::-webkit-slider-thumb]:size-3 [&::-webkit-slider-thumb]:appearance-none [&::-webkit-slider-thumb]:rounded-full [&::-webkit-slider-thumb]:border [&::-webkit-slider-thumb]:border-[#888] [&::-webkit-slider-thumb]:bg-[#f5f5f5]"
        />
        <Tool label="放大" width="w-[18px]">
          <svg width="9" height="9" viewBox="0 0 9 9" stroke="#555" strokeWidth="2"><path d="M4.500 0v9M0 4.500h9" /></svg>
        </Tool>
        <span className="w-[13px]" />
      </div>
    </footer>
  );
}

function Watermark() {
  return (
    <div className="pointer-events-none absolute right-[41px] bottom-2 w-[178px] font-['Liberation_Sans','Noto_Sans_CJK_SC',sans-serif] text-white/80">
      <div className="flex items-end text-[39px] leading-[30px] font-bold [-webkit-text-stroke:1px_#c8c8c8]">
        <span>Bai</span>
        <span className="relative">
          <svg width="54" height="56" viewBox="0 0 54 56" fill="white" fillOpacity=".8" stroke="#c8c8c8" strokeWidth="1.300">
            <ellipse cx="8" cy="22" rx="6.500" ry="9" />
            <ellipse cx="20" cy="10" rx="7" ry="9" />
            <ellipse cx="36" cy="11" rx="7" ry="9" />
            <ellipse cx="46" cy="26" rx="6.500" ry="8" />
            <path d="M27 23q6 0 10 7t9 12q4 12-7 13-6-1-12-1t-12 1q-12-1-8-13 5-5 10-12t10-7z" />
          </svg>
          <span className="absolute bottom-[3px] left-[13px] text-[22px] leading-6">du</span>
        </span>
        <span className="text-[30px]">经验</span>
      </div>
      <p className="text-[20px] leading-[24px] font-['Open_Sans',sans-serif] whitespace-nowrap">jingyan.baidu.com</p>
    </div>
  );
}

export default function App() {
  return (
    <div className="h-screen bg-white p-[13px] font-['Open_Sans','Noto_Sans_CJK_SC',sans-serif] text-[11px] text-[#444]">
      <div className="relative flex h-full flex-col bg-[#e2e2e4] shadow-[1px_1px_7px_3px_rgba(0,0,0,0.65)]">
        <TitleBar />
        <nav className="flex h-[25px] shrink-0 items-end pl-1">
          {ribbonTabs.map((tab, i) => (
            <button
              key={tab.label}
              className={clsx('h-[21px] shrink-0 whitespace-nowrap', tab.width, i === 0 && 'bg-[#fafafa] font-bold text-[#4c9a2a]')}
            >
              {tab.label}
            </button>
          ))}
        </nav>
        <Ribbon />
        <QuickBar />
        <div className="flex min-h-0 flex-1">
          <div className="flex min-w-0 flex-1 flex-col">
            <FormulaBar />
            <div className="flex min-h-0 flex-1">
              <Sheet />
              <VerticalScroll />
            </div>
            <SheetTabs />
          </div>
          <SidePanel />
        </div>
        <StatusBar />
        <Watermark />
      </div>
    </div>
  );
}
